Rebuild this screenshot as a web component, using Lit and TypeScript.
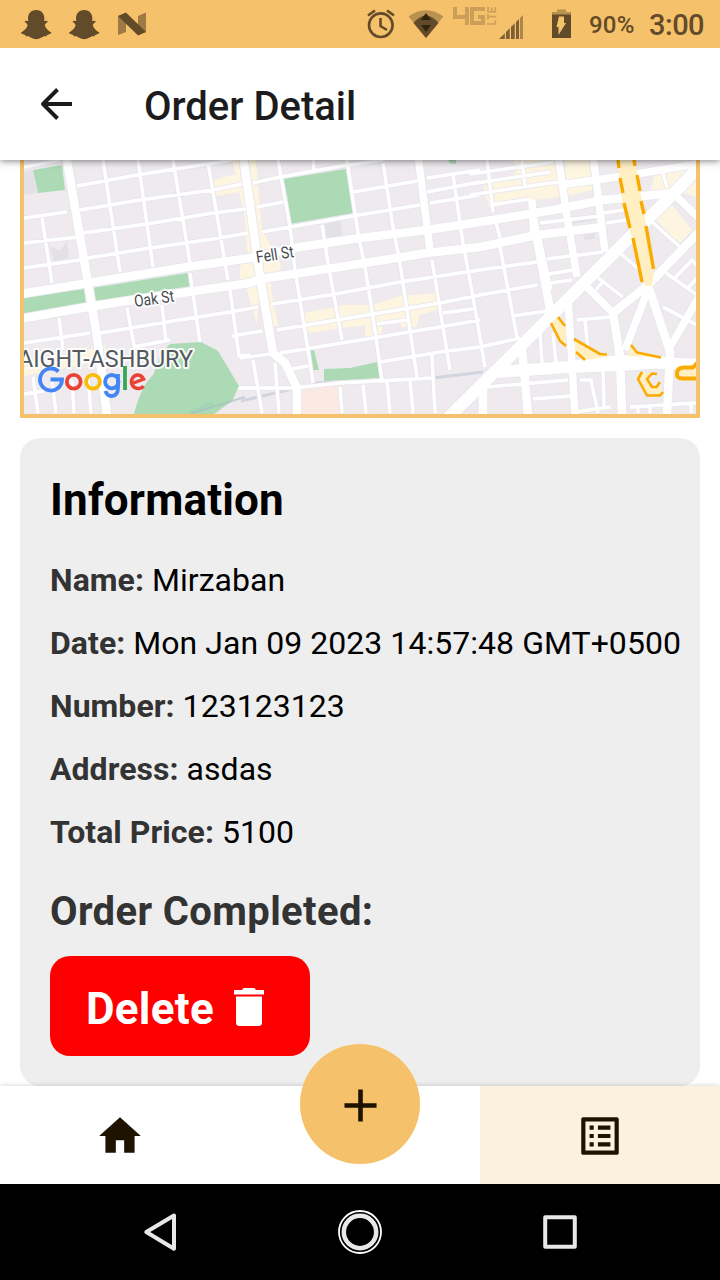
import { LitElement, html, svg, css } from "lit";
import { customElement } from "lit/decorators.js";

// Street geometry of the map, grouped by stroke width. Map units are screen pixels.
const ROADS: { w: number; d: string }[] = [
  {
    w: 3.4,
    d: `M24 167L60 160M77 186L137 175L207 164L232 160M80 210L140 200L213 190L242 184M253 183L280 177L347 165L383 160
    M24 218L67 212M83 233L147 224L213 213L246 209M257 207L283 202M353 192L417 181M427 178L480 170M24 243L78 237
    M88 258L150 248L213 239L248 233M262 232L290 227L353 216L420 205M430 203L480 195M427 192L480 182M24 268L80 260
    M24 343L90 333M100 333L167 322L230 312L258 307M272 304L330 295L400 282L480 270L537 262M547 259L603 252
    M133 347L170 340M232 336L262 331M277 330L337 320L440 303L480 295L537 285M550 283L572 280M240 358L270 354M280 353L373 338L440 327L480 320
    M380 362L440 352L480 347L520 338M210 388L293 388L340 383L433 378M292 369L308 366M377 324L407 320M443 313L473 309
    M512 316L548 311M549 274L573 270M103 160L120 272M138 160L153 267M173 160L190 263M190 273L200 343M208 163L228 280
    M230 290L239 356L250 355M42 218L52 283M59 318L63 350M127 308L134 345M162 305L166 342
    M278 160L290 227L295 270L308 350L313 383M313 160L314 170M322 225L328 263L342 340M347 160L358 233L365 267L373 317L382 380
    M383 163L393 227L400 263L417 377M432 260L450 370M453 175L463 243L473 297L485 367
    M33 377L38 413M52 380L56 413M72 380L74 413M88 378L91 413M24 394L44 391M253 360L262 413M275 363L279 413M340 387L342 413
    M363 385L366 413M387 380L390 413M410 380L413 413M432 355L435 413M487 160L493 212M496 222L500 238M500 247L517 337
    M522 160L525 187M470 174L553 162M470 184L550 172M470 195L550 183L600 180M490 205L531 199M540 223L600 216M603 213L624 210
    M606 223L626 220M577 320L610 317M585 320L588 350M487 387L568 380M533 399L570 396M540 333L542 363M553 333L556 363
    M603 367L604 407M580 380L591 380L598 413M574 412L610 407M630 407L697 403M638 407V413M650 407V413M691 404V413
    M620 253L640 270M598 278L623 297M596 290L604 280M650 220L680 247M666 273L697 295M673 280L692 260L697 266M688 288L697 278M663 307L697 325M662 170L667 187`,
  },
  {
    w: 7.5,
    d: `M418 155L430 250M558 155L567 217L577 277M593 155L605 252M583 283L613 313M648 290L625 350M568 297L575 415
    M673 193L700 219M670 347L700 295M537 235L549 290M560 185L624 176L697 164M532 200L534 240`,
  },
  {
    w: 8.5,
    d: `M66 155L88 283L97 337L107 415M243 155L260 277L273 353L285 363L297 388V415M20 294L88 283L187 267L250 258L300 247L360 238L427 230L480 222L553 210L603 200L673 193
    M20 319L88 307L133 300L250 283L260 279L340 267L427 253L480 247L537 235L603 227M532 212L551 315
    M613 313L648 285L700 231M613 313L620 357L622 415M649 288L670 352L667 415M522 347L528 415M483 380V415`,
  },
  { w: 12, d: `M448 418L550 317L610 257L673 194L700 166M497 372L568 367L620 361L700 365M568 367L620 365L664 362` },
];

const snap = "M16 2C10.4 2 7.6 6 7.8 11L8 13C6.5 13 4.600 12 4.600 13.600C4.700 15 7.600 15.500 7.300 17.500C6.500 20.500 3.600 23 .8 24.500C.8 26.500 5.500 26 6 28.500C9.500 27.500 11.500 31.200 16 31.300C20.500 31.200 22.500 27.500 26 28.500C26.500 26 31.200 26.500 31.200 24.500C28.400 23 25.500 20.500 24.700 17.500C24.400 15.500 27.300 15 27.400 13.600C27.400 12 25.500 13 24 13L24.200 11C24.400 6 21.600 2 16 2Z";

@customElement("status-bar")
class StatusBar extends LitElement {
  static styles = css`
    :host { display: flex; height: 48px; background: #f6c16b; color: #624b29; align-items: center; font-weight: 500; }
    .icons { flex: none; width: 580px; height: 48px; display: block; }
    .pct { font-size: 24px; width: 60px; margin-left: 9px; line-height: 48px; padding-top: 2px; box-sizing: border-box; letter-spacing: .2px; }
    .time { font-size: 29px; line-height: 50px; white-space: nowrap; padding-top: 2px; letter-spacing: -.5px; }
  `;
  render() {
    return html`
      <svg class="icons" viewBox="0 0 580 48">
        <g fill="#624b29">
          <path transform="translate(20.200 8)" d=${snap} />
          <path transform="translate(68.200 8)" d=${snap} />
          <path d="M118 16L126 13V32L118 35ZM138 16L146 12.500V32L138 35Z" opacity=".6" />
          <path d="M118 16L126 12.500L146 32L138 35.500Z" />
        </g>
        <g fill="none" stroke="#624b29" stroke-width="2.600">
          <circle cx="380.800" cy="25.200" r="11.800" />
          <path d="M380.500 18V26L387 30M368 15.500L375 10.500M387 10.500L394 15.500" />
        </g>
        <path d="M408.500 16.500Q426 4 443.500 16.500L426 38Z" fill="#b99150" />
        <path d="M413.500 23Q426 8 438.500 23L426 38Z" fill="#624b29" />
        <path d="M421 20L426 13L431 20ZM421 25H431L426 32Z" fill="#2f230f" />
        <g fill="none" stroke="#cc9f58" stroke-width="4">
          <path d="M455 7V17H467M467 7V25M485 9H472V23H483V17H478" />
          <path stroke-width="1.700" d="M488 7V12M491.700 7.500V12M495.300 7V12M487.200 12H496.200M488 14V19.500M488 16.700H496.200M487.200 24H496.200M495.300 20.500V24.500" />
        </g>
        <g fill="#7c5f34">
          <path d="M499 39L504.800 33.200V39ZM506 32L509.700 28.300V39H506ZM511 27L514.700 23.300V39H511ZM516 22L519 19V39H516Z" />
          <path opacity=".6" d="M520 18L523 15V39H520Z" />
        </g>
        <path d="M557 9.500H566V12H571V16H552V12H557Z" fill="#b99150" />
        <path d="M552 14.500H571V38H552Z" fill="#624b29" />
        <path d="M559 16.500H564V23H566L558.500 35V27H556.500Z" fill="#f6c16b" />
      </svg>
      <span class="pct">90%</span><span class="time">3:00</span>
    `;
  }
}

@customElement("city-map")
class CityMap extends LitElement {
  static styles = css`
    :host { display: block; height: 254px; border: 4px solid #f6c16b; border-top: 0; overflow: hidden; }
    svg { display: block; width: 672px; height: 254px; overflow: hidden; }
    .street { font: 400 16.500px Roboto, sans-serif; fill: #474b50; }
    .area { font: 400 23.500px Roboto, sans-serif; fill: #54595e; }
    .halo { stroke: #fff; stroke-opacity: .9; stroke-width: 4px; stroke-linejoin: round; paint-order: stroke; }
  `;
  render() {
    return html`
      <svg viewBox="24 160 672 254">
        <rect x="24" y="160" width="672" height="254" fill="#eeeaee" />
        <path fill="#e3e1e6" d="M24 172L33 170L37 193L24 195ZM50 246L60 251L67 241L69 258L54 261ZM325 224L340 220L343 236L327 239ZM571 217L595 214V220L572 224ZM583 235L595 232V238L585 241Z" />
        <path fill="#fef5e1" d="M213 180L236 174L232 160H256L262 230L281 265L280 272L270 280L278 326H273L260 279L257 325L247 290L240 285V266L248 258L244 212L239 192L215 196ZM303 313L345 305H373L400 296L437 293L440 309L420 315L416 327H401V318L382 322V334L365 337V325L307 333ZM483 187L516 173L515 160H557L560 197L535 200L490 208ZM565 160H590L592 190L567 196ZM656 170L697 160V197L675 190L648 200ZM655 219L672 205L692 230L679 244ZM24 367L105 345V360L24 376Z" />
        <path fill="#acdab5" d="M33 170L62 165L65 190L38 193ZM24 297L84 289L86 304L24 315ZM92 288L188 273L191 286L94 302ZM283 179L346 169L353 213L290 224ZM310 350H314L319 370H313ZM324 369L350 368L377 362L380 378L324 381ZM448 160H456V164L450 163Z" />
        <path fill="#fbe9e4" d="M301 388L339 386V414H301Z" />
        <path fill="none" stroke="#d2d4df" stroke-width="3" d="M241 401L292 389M313 383L433 378L483 372" />
        <g fill="none" stroke="#e6e6ee" stroke-linejoin="round">
          ${ROADS.map((r) => svg`<path d=${r.d} stroke-width=${r.w + 1.7} />`)}
        </g>
        <g fill="none" stroke="#fff" stroke-linejoin="round">
          ${ROADS.map((r) => svg`<path d=${r.d} stroke-width=${r.w} />`)}
        </g>
        <path fill="#acdab5" d="M324 370L350 368.500L377 363L379 377L324 380ZM134 414Q141 386 153 375L162 352L170 344L201 342L218 351L239 386L232 401L214 414Z" />
        <path fill="#a2d5b8" d="M186 413L212 401L214 406L196 413Z" />
        <path fill="none" stroke="#a7bcc2" stroke-opacity=".6" stroke-width="2" d="M190 414L232 401L245 397" />

        <path fill="#ffefc3" d="M617 160H635L654 271L652 286H645L631 234L623 208Z" />
        <path fill="none" stroke="#fbab00" stroke-width="3.400" d="M618 160L619 168M620 178L623 193M624 203L630 228M633 238L642 282M634 160L635 166M637 175L640 191M641 201L644 214M646 226L653.500 269" />
        <path fill="#ffefc3" d="M551 324L557 317L566 328V345L560 341ZM575 340L601 354L610 356L586 360L575 354Z" />
        <path fill="#ffefc3" d="M631 346L637 353L661 358L628 356ZM642 372L638 379L647 396H660L663 388L657 387H652L647 379L652 373Z" />
        <g fill="none" stroke="#fbab00" stroke-width="2.600" stroke-linejoin="round">
          <path d="M551 323L560 341L566 346M558 317L565 326M574 339L600 354L607 354.500M576 352L585 360M631 345L637 352.500L661 357.500" />
          <path d="M642 372L638 379L647 395.500H660L663 392M657 374L652 373.500L647 379L652 387H656.500L660 382" />
          <path fill="#ffefc3" stroke-width="4" d="M699 378.500H682Q676.500 378.500 677 373Q677.500 367.500 684 367.500H693L697 363" />
        </g>
        <text class="street halo" transform="translate(257 263) rotate(-9)" textLength="38" lengthAdjust="spacingAndGlyphs">Fell St</text>
        <text class="street halo" transform="translate(135 307) rotate(-8)" textLength="40" lengthAdjust="spacingAndGlyphs">Oak St</text>
        <text class="area halo" x="18" y="367" textLength="175" lengthAdjust="spacingAndGlyphs">AIGHT-ASHBURY</text>
        <g fill="none" stroke-width="3.800">
          <path stroke="#4285f4" d="M58.500 371.500A11 11 0 1 0 62 379.500H50.500" />
          <circle stroke="#ea4335" cx="73.700" cy="381.700" r="6.900" />
          <circle stroke="#fbbc04" cx="93" cy="381.700" r="6.900" />
          <circle stroke="#4285f4" cx="111.800" cy="381.700" r="6.700" />
          <path stroke="#4285f4" d="M118 374V388Q118 396 111.500 396Q107 396 105.500 391" />
          <path stroke="#34a853" d="M125 366V390" />
          <path stroke="#ea4335" stroke-width="3.500" d="M131 384L143.500 379Q141.500 374.800 137.200 375A6.800 6.800 0 1 0 143.500 386" />
        </g>
      </svg>
    `;
  }
}

@customElement("tab-bar")
class TabBar extends LitElement {
  static styles = css`
    :host { display: grid; grid-template-columns: repeat(3, 1fr); height: 98px; background: #fff; position: relative; box-shadow: 0 0 5px rgba(0, 0, 0, .2); clip-path: inset(-50px 0 0 0); }
    .tab { display: flex; align-items: center; justify-content: center; }
    .tab svg { width: 50px; height: 50px; margin-top: 2px; }
    .active { background: #fcf0df; }
    .fab { position: absolute; left: 300px; top: -42px; width: 120px; height: 120px; border-radius: 50%; background: #f6c16b; display: flex; align-items: center; justify-content: center; }
    .fab svg { width: 55px; height: 55px; margin: 2px 0 0 0; }
    path { fill: #1e1200; }
  `;
  render() {
    return html`
      <div class="tab"><svg viewBox="0 0 24 24"><path d="M10 20V14H14V20H19V12H22L12 3L2 12H5V20H10Z" /></svg></div>
      <div class="tab"></div>
      <div class="tab active"><svg viewBox="0 0 24 24"><path d="M19 5v14H5V5h14m1.100-2H3.900c-.5 0-.9.4-.9.9v16.200c0 .4.4.9.9.9h16.200c.4 0 .9-.5.9-.9V3.900c0-.5-.5-.9-.9-.9zM11 7h6v2h-6V7zm0 4h6v2h-6v-2zm0 4h6v2h-6zM7 7h2v2H7zm0 4h2v2H7zm0 4h2v2H7z" /></svg></div>
      <div class="fab"><svg viewBox="0 0 24 24"><path d="M19 13h-6v6h-2v-6H5v-2h6V5h2v6h6v2z" /></svg></div>
    `;
  }
}

@customElement("system-nav")
class SystemNav extends LitElement {
  static styles = css`
    :host { display: block; height: 96px; background: #000; }
    svg { display: block; width: 720px; height: 96px; }
  `;
  render() {
    return html`
      <svg viewBox="0 0 720 96" fill="none" stroke="#e8e8e8" stroke-width="4" stroke-linejoin="round">
        <path d="M146.300 48L174 31.500V64.800Z" />
        <circle cx="360" cy="48" r="16.200" stroke-width="4.500" />
        <circle cx="360" cy="48" r="21" stroke="#fff" stroke-width="1.800" />
        <rect x="545.200" y="33.200" width="29.600" height="29.600" />
      </svg>
    `;
  }
}

@customElement("app-root")
class AppRoot extends LitElement {
  static styles = css`
    :host { display: flex; flex-direction: column; height: 1280px; width: 720px; overflow: hidden; background: #fff; font-family: Roboto, sans-serif; color: #000; }
    header { flex: none; height: 112px; display: flex; align-items: center; background: #fff; box-shadow: 0 1px 7px rgba(0, 0, 0, .5); position: relative; z-index: 1; clip-path: inset(0 0 -12px 0); }
    header svg { width: 34px; height: 34px; margin-left: 39px; }
    h1 { margin: 6px 0 0 71px; font-size: 40px; font-weight: 500; color: #1c1c1e; line-height: 48px; white-space: nowrap; }
    main { flex: 1; min-height: 0; padding: 0 20px; display: flex; flex-direction: column; gap: 20px; }
    .card { height: 648px; flex: none; box-sizing: border-box; background: #eee; border-radius: 20px; padding: 31px 0 0 30px; }
    h2 { margin: 0 0 18px; font-size: 44px; line-height: 62px; font-weight: 700; letter-spacing: .18px; }
    .row { font-size: 32px; line-height: 63px; white-space: nowrap; letter-spacing: .05px; }
    .row b, h3 { color: #333; font-weight: 700; }
    h3 { margin: 11px 0 0; font-size: 40px; line-height: 74px; letter-spacing: .37px; }
    .delete { display: flex; align-items: center; width: 260px; height: 100px; margin-top: 7px; box-sizing: border-box; padding: 5px 0 0 36px; border-radius: 20px; background: #f00; color: #fff; font-size: 44px; font-weight: 700; letter-spacing: .25px; }
    .delete svg { width: 30px; height: 38px; margin: -3px 0 0 20px; }
  `;
  private rows = [
    ["Name:", "Mirzaban"],
    ["Date:", "Mon Jan 09 2023 14:57:48 GMT+0500"],
    ["Number:", "123123123"],
    ["Address:", "asdas"],
    ["Total Price:", "5100"],
  ];
  render() {
    return html`
      <status-bar></status-bar>
      <header>
        <svg viewBox="0 0 34 34" fill="none" stroke="#1c1c1e" stroke-width="3.900"><path d="M33 17H4M18.500 2.500L4 17L18.500 31.500" stroke-linejoin="round" stroke-linecap="butt" /></svg>
        <h1>Order Detail</h1>
      </header>
      <main>
        <city-map></city-map>
        <section class="card">
          <h2>Information</h2>
          ${this.rows.map(([k, v]) => html`<div class="row"><b>${k}</b> ${v}</div>`)}
          <h3>Order Completed:</h3>
          <div class="delete">
            Delete
            <svg viewBox="0 0 30 38" fill="#fff"><path d="M0 2H8L9.500 0H20.500L22 2H30V6.600H0ZM2 8.400H28V34.500Q28 38 24.500 38H5.500Q2 38 2 34.500Z" /></svg>
          </div>
        </section>
      </main>
      <tab-bar></tab-bar>
      <system-nav></system-nav>
    `;
  }
}
